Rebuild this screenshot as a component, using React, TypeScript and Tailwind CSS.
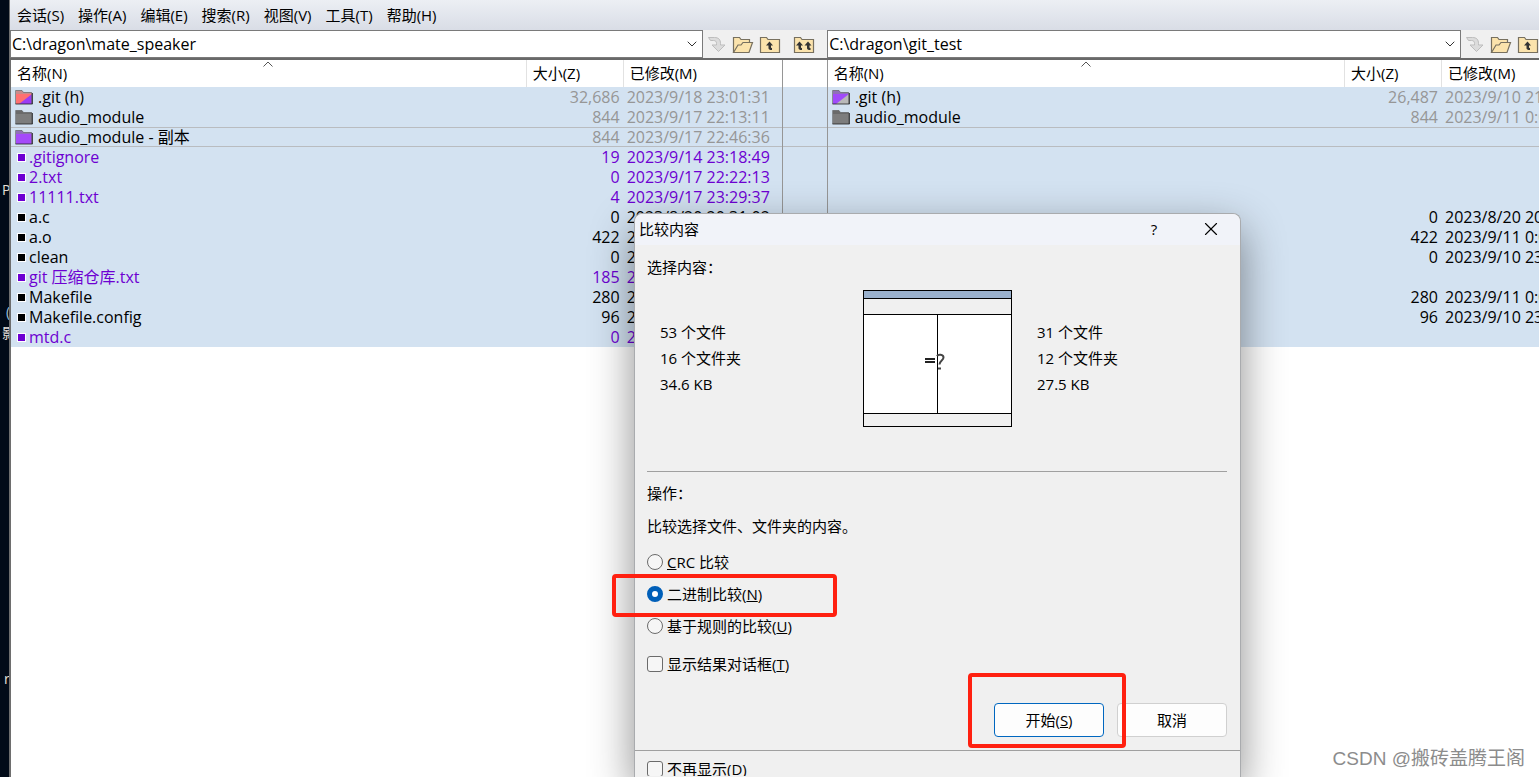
import React, { useState } from 'react';
import { ChevronDown, X } from 'lucide-react';

type Kind = 'same' | 'orphan' | 'folder';

interface Entry {
  name: string;
  icon: string;
  size: string;
  modified: string;
  kind: Kind;
}

const EMPTY: Entry = { name: '', icon: '', size: '', modified: '', kind: 'same' };

const FOCUSED_ROW = 2;

const leftEntries: Entry[] = [
  { name: '.git (h)', icon: 'folder-red', size: '32,686', modified: '2023/9/18 23:01:31', kind: 'folder' },
  { name: 'audio_module', icon: 'folder-gray', size: '844', modified: '2023/9/17 22:13:11', kind: 'folder' },
  { name: 'audio_module - 副本', icon: 'folder-purple', size: '844', modified: '2023/9/17 22:46:36', kind: 'folder' },
  { name: '.gitignore', icon: 'file', size: '19', modified: '2023/9/14 23:18:49', kind: 'orphan' },
  { name: '2.txt', icon: 'file', size: '0', modified: '2023/9/17 22:22:13', kind: 'orphan' },
  { name: '11111.txt', icon: 'file', size: '4', modified: '2023/9/17 23:29:37', kind: 'orphan' },
  { name: 'a.c', icon: 'file', size: '0', modified: '2023/8/20 20:31:02', kind: 'same' },
  { name: 'a.o', icon: 'file', size: '422', modified: '2023/9/11 0:03:12', kind: 'same' },
  { name: 'clean', icon: 'file', size: '0', modified: '2023/9/10 23:40:25', kind: 'same' },
  { name: 'git 压缩仓库.txt', icon: 'file', size: '185', modified: '2023/9/17 22:50:08', kind: 'orphan' },
  { name: 'Makefile', icon: 'file', size: '280', modified: '2023/9/11 0:02:54', kind: 'same' },
  { name: 'Makefile.config', icon: 'file', size: '96', modified: '2023/9/10 23:38:16', kind: 'same' },
  { name: 'mtd.c', icon: 'file', size: '0', modified: '2023/9/17 22:21:40', kind: 'orphan' },
];

const rightEntries: Entry[] = [
  { name: '.git (h)', icon: 'folder-mixed', size: '26,487', modified: '2023/9/10 21:48:30', kind: 'folder' },
  { name: 'audio_module', icon: 'folder-gray', size: '844', modified: '2023/9/11 0:03:12', kind: 'folder' },
  EMPTY,
  EMPTY,
  EMPTY,
  EMPTY,
  { name: 'a.c', icon: 'file', size: '0', modified: '2023/8/20 20:31:02', kind: 'same' },
  { name: 'a.o', icon: 'file', size: '422', modified: '2023/9/11 0:03:12', kind: 'same' },
  { name: 'clean', icon: 'file', size: '0', modified: '2023/9/10 23:40:25', kind: 'same' },
  EMPTY,
  { name: 'Makefile', icon: 'file', size: '280', modified: '2023/9/11 0:02:54', kind: 'same' },
  { name: 'Makefile.config', icon: 'file', size: '96', modified: '2023/9/10 23:38:16', kind: 'same' },
  EMPTY,
];

const menus = ['会话(S)', '操作(A)', '编辑(E)', '搜索(R)', '视图(V)', '工具(T)', '帮助(H)'];

const folderColors: Record<string, [string, string, string]> = {
  'folder-red': ['#ff7070', '#9a3cf5', '#c98a8a'],
  'folder-gray': ['#7d7d7d', '#7d7d7d', '#6a6a6a'],
  'folder-purple': ['#a54bfa', '#a54bfa', '#9070b8'],
  'folder-mixed': ['#a04bfa', '#b9b9b9', '#9070b8'],
};

const FolderGlyph: React.FC<{ icon: string }> = ({ icon }) => {
  const [front, back, tab] = folderColors[icon];
  return (
    <svg width="18" height="16" viewBox="0 0 18 16" className="shrink-0">
      <path d="M1 1.5h6l1.5 2H17V15H1z" fill={tab} />
      <path d="M1 5h16v10H1z" fill={back} />
      <path d="M1 5h16L4 15H1z" fill={front} />
      <path d="M.5 15V1.5h6.500l1.500 2h8V15" fill="none" stroke="#555" strokeOpacity=".6" />
      <path d="M.5 15h17V4" fill="none" stroke="#222" strokeOpacity=".8" />
    </svg>
  );
};

const nameColor: Record<Kind, string> = {
  same: 'text-black',
  orphan: 'text-[#6d00d2]',
  folder: 'text-black',
};

const detailColor: Record<Kind, string> = {
  same: 'text-black',
  orphan: 'text-[#6d00d2]',
  folder: 'text-[#969696]',
};

const SortMark = () => (
  <svg width="11" height="6" viewBox="0 0 11 6" className="absolute top-px left-1/2 -translate-x-1/2">
    <path d="M1 5.500l4.500-4.500L10 5.500" fill="none" stroke="#555" />
  </svg>
);

const FileTable: React.FC<{ entries: Entry[]; modifiedCol: string; label: string }> = ({
  entries,
  modifiedCol,
  label,
}) => (
  <table aria-label={label} className="w-full table-fixed border-separate border-spacing-0">
    <colgroup>
      <col />
      <col className="w-[97px]" />
      <col className={modifiedCol} />
    </colgroup>
    <thead>
      <tr className="h-[27px] bg-white text-left">
        <th className="relative p-0 pb-0.5 pl-1.5 font-normal">
          名称(N)
          <SortMark />
        </th>
        <th className="border-l border-[#e2e2e2] p-0 pb-0.5 pl-1.5 font-normal">大小(Z)</th>
        <th className="border-l border-[#e2e2e2] p-0 pb-0.5 pl-1.5 font-normal whitespace-nowrap">已修改(M)</th>
      </tr>
    </thead>
    <tbody className="text-[16px]">
      {entries.map((item, index) => {
        const line = index === FOCUSED_ROW ? 'border-y border-[#b9bcc0]' : '';
        return (
          <tr key={index} className="h-5 bg-[#d3e2f1] leading-[18px] whitespace-nowrap">
            <td className={`p-0 pl-1 ${line} ${nameColor[item.kind]}`}>
              {item.icon === 'file' && (
                <span className="flex items-center gap-1 pl-[3px]">
                  <span className="h-[7px] w-[7px] bg-current outline-1 outline-white" />
                  {item.name}
                </span>
              )}
              {item.icon.startsWith('folder') && (
                <span className="flex items-center gap-[5px]">
                  <FolderGlyph icon={item.icon} />
                  {item.name}
                </span>
              )}
            </td>
            <td className={`p-0 pr-[3px] text-right ${line} ${detailColor[item.kind]}`}>{item.size}</td>
            <td className={`overflow-hidden p-0 pl-1 ${line} ${detailColor[item.kind]}`}>{item.modified}</td>
          </tr>
        );
      })}
    </tbody>
  </table>
);

const PathBox: React.FC<{ value: string; label: string }> = ({ value, label }) => {
  const [path, setPath] = useState(value);
  return (
    <div className="flex h-7 min-w-0 flex-1 items-center border border-[#7a7a7a] bg-white pr-0.5">
      <input
        aria-label={label}
        value={path}
        onChange={(e) => setPath(e.target.value)}
        className="min-w-0 flex-1 bg-transparent pl-px text-[16px] outline-none"
      />
      <button type="button" aria-label="历史路径">
        <ChevronDown className="h-4 w-4 text-[#333]" strokeWidth={1.5} />
      </button>
    </div>
  );
};

const FolderBase = () => (
  <path d="M1.500 17.500V2.500h6l1.500 2h11.500v13z" fill="#fbe3ac" stroke="#77705f" strokeWidth="1.200" />
);

const JumpIcon = () => (
  <svg width="20" height="18" viewBox="0 0 20 18">
    <path d="M1.500 2.500h6c4 0 6 2 6 6v1.500h4.500l-6.500 6.500L5 10h4.500V8.500c0-2-1-3-3-3h-3z" fill="#dcdcdc" stroke="#bdbdbd" />
  </svg>
);

const OpenFolderIcon = () => (
  <svg width="22" height="19" viewBox="0 0 22 19">
    <path d="M1.500 17.500V2.500h6l1.500 2h8.500V8" fill="#fbe3ac" stroke="#77705f" strokeWidth="1.200" />
    <path d="M1.500 17.500L6 10h3l2-2.500h9.500l-3.500 10z" fill="#fbe3ac" stroke="#77705f" strokeWidth="1.200" />
  </svg>
);

const UpIcon = () => (
  <svg width="22" height="19" viewBox="0 0 22 19">
    <FolderBase />
    <path d="M10.500 6.500L7 10.500h2.500V13c0 1.500 1 2 3.500 2v-2c-1 0-1-.5-1-1v-1.500h2z" fill="#333" />
  </svg>
);

const UpBothIcon = () => (
  <svg width="22" height="19" viewBox="0 0 22 19">
    <FolderBase />
    <path d="M6.500 6.500L3 10.500h2.500V13c0 1.500 1 2 3.500 2v-2c-1 0-1-.5-1-1v-1.500h2z" fill="#333" />
    <path d="M15 6.500l-3.500 4H14V13c0 1.500 1 2 3.500 2v-2c-1 0-1-.5-1-1v-1.500h2z" fill="#333" />
  </svg>
);

const PathTools = () => (
  <div className="flex shrink-0 items-center">
    <button type="button" aria-label="转到" className="ml-1 w-[22px]"><JumpIcon /></button>
    <button type="button" aria-label="浏览文件夹" className="ml-[3px]"><OpenFolderIcon /></button>
    <button type="button" aria-label="上一级" className="ml-[5px]"><UpIcon /></button>
  </div>
);

const Desktop = () => (
  <div className="relative w-[9px] shrink-0 overflow-hidden bg-[#020b18] text-sm leading-5 text-[#e8e0d8]">
    <span className="absolute left-0.5 top-[180px]">P</span>
    <span className="absolute left-1.5 top-[302px] text-[#9fc0d8]">(</span>
    <span className="absolute left-0.5 top-[323px]">影</span>
    <span className="absolute left-1 top-[669px]">r</span>
  </div>
);

const radioClass =
  'h-4 w-4 shrink-0 appearance-none rounded-full border border-[#6b6b6b] bg-[#f6f6f6] checked:border-[5px] checked:border-[#005fb8] checked:bg-white';
const checkClass = 'h-4 w-4 shrink-0 appearance-none rounded-[3px] border border-[#6b6b6b] bg-[#f6f6f6] checked:bg-[#005fb8]';

const LayoutDiagram = () => (
  <svg width="149" height="137" viewBox="0 0 149 137" shapeRendering="crispEdges">
    <rect x=".5" y=".5" width="148" height="136" fill="#f0f0f0" stroke="#000" />
    <rect x="1" y="1" width="147" height="7" fill="#9ab1cd" />
    <rect x="1" y="25" width="147" height="98" fill="#fff" />
    <path d="M0 8.500h149M0 24.500h149M0 123.500h149M74.500 25v98" stroke="#000" />
    <path d="M62 69h10M62 72h10" stroke="#222" strokeWidth="2" />
    <path d="M74 66c1-2 6.500-2 6.500 1.500 0 3-4 3-4 7M75 78.500h3" fill="none" stroke="#444" strokeWidth="2" shapeRendering="auto" />
  </svg>
);

const Stats: React.FC<{ lines: string[]; className: string }> = ({ lines, className }) => (
  <div className={`leading-[26px] ${className}`}>
    {lines.map((line) => (
      <p key={line}>{line}</p>
    ))}
  </div>
);

const CompareDialog = () => {
  const [method, setMethod] = useState('binary');
  const [showResult, setShowResult] = useState(false);
  const [dontShow, setDontShow] = useState(false);

  return (
    <div
      role="dialog"
      aria-label="比较内容"
      className="absolute top-[213px] bottom-0 left-[634px] w-[607px] rounded-t-lg border border-b-0 border-[#a9abae] bg-[#f0f0f0] shadow-[0_16px_44px_rgba(0,0,0,0.45)]"
    >
      <div className="flex h-[31px] items-center rounded-t-lg bg-[#f1f3f9] pb-0.5 pl-1">
        <h1 className="flex-1">比较内容</h1>
        <button type="button" aria-label="帮助" className="mr-[38px] w-4">?</button>
        <button type="button" aria-label="关闭" className="mr-[18px]">
          <X className="h-[22px] w-[22px]" strokeWidth={1.25} />
        </button>
      </div>

      <div className="pt-2.5 pr-[13px] pl-3">
        <h2 className="leading-6">选择内容：</h2>
        <div className="flex h-[193px] items-start border-b border-[#a0a0a0] pt-[11px]">
          <Stats lines={['53 个文件', '16 个文件夹', '34.6 KB']} className="w-[216px] pt-[29px] pl-[13px]" />
          <LayoutDiagram />
          <Stats lines={['31 个文件', '12 个文件夹', '27.5 KB']} className="pt-[29px] pl-[25px]" />
        </div>

        <h2 className="pt-[9px] leading-6">操作：</h2>
        <p className="pt-[9px] leading-6">比较选择文件、文件夹的内容。</p>

        <div className="relative flex flex-col gap-2 pt-3">
          <label className="flex h-6 items-center gap-1">
            <input type="radio" name="method" className={radioClass} checked={method === 'crc'} onChange={() => setMethod('crc')} />
            <span><u>C</u>RC 比较</span>
          </label>
          <label className="flex h-6 items-center gap-1">
            <input type="radio" name="method" className={radioClass} checked={method === 'binary'} onChange={() => setMethod('binary')} />
            <span>二进制比较(<u>N</u>)</span>
          </label>
          <label className="flex h-6 items-center gap-1">
            <input type="radio" name="method" className={radioClass} checked={method === 'rules'} onChange={() => setMethod('rules')} />
            <span>基于规则的比较(<u>U</u>)</span>
          </label>
          <div className="pointer-events-none absolute top-9 -left-[35px] h-[43px] w-[225px] rounded border-4 border-[#ff2010]" />
        </div>

        <label className="mt-3.5 flex h-6 items-center gap-1">
          <input type="checkbox" className={checkClass} checked={showResult} onChange={() => setShowResult(!showResult)} />
          <span>显示结果对话框(<u>T</u>)</span>
        </label>

        <div className="relative mt-[27px] flex justify-end gap-[13px]">
          <button type="button" className="h-[34px] w-[110px] rounded border border-[#0067c0] bg-[#fdfdfd]">
            开始(<u>S</u>)
          </button>
          <button type="button" className="h-[34px] w-[110px] rounded border border-[#d0d0d0] bg-[#fdfdfd]">取消</button>
          <div className="pointer-events-none absolute -top-[30px] right-[101px] h-[75px] w-[158px] rounded border-4 border-[#ff2010]" />
        </div>
      </div>

      <div className="mt-[13px] h-[26px] overflow-hidden border-t border-[#a0a0a0] px-3 pt-1.5">
        <label className="flex h-6 items-center gap-1">
          <input type="checkbox" className={checkClass} checked={dontShow} onChange={() => setDontShow(!dontShow)} />
          <span>不再显示(<u>D</u>)</span>
        </label>
      </div>
    </div>
  );
};

const App: React.FC = () => {
  return (
    <div className="relative flex h-screen overflow-hidden bg-white font-['Open_Sans','Noto_Sans_CJK_SC',sans-serif] text-[15px] leading-5 text-black">
      <Desktop />
      <main className="flex min-w-0 flex-1 flex-col border-l border-[#6e6e6e]">
        <nav className="flex h-[30px] items-center gap-3.5 bg-linear-to-b from-[#eceff4] to-[#d9dde6] pl-[7px]">
          {menus.map((menu) => (
            <button type="button" key={menu}>{menu}</button>
          ))}
        </nav>

        <div className="grid grid-cols-[52fr_46px_48fr] border-b-2 border-[#696969] bg-[#f0f0f0]">
          <div className="flex">
            <PathBox value="C:\dragon\mate_speaker" label="左侧路径" />
            <PathTools />
          </div>
          <div className="flex items-center pl-3">
            <button type="button" aria-label="两侧上一级"><UpBothIcon /></button>
          </div>
          <div className="flex">
            <PathBox value="C:\dragon\git_test" label="右侧路径" />
            <PathTools />
          </div>
        </div>

        <div className="grid flex-1 grid-cols-[52fr_46px_48fr] border-l border-[#6e6e6e]">
          <section className="min-w-0">
            <FileTable entries={leftEntries} modifiedCol="w-[159px]" label="左侧文件" />
          </section>
          <section className="border-x border-[#969696] pt-[27px]">
            {leftEntries.map((_, index) => (
              <div
                key={index}
                className={`h-5 bg-[#d3e2f1] ${index === FOCUSED_ROW ? 'border-y border-[#b9bcc0]' : ''}`}
              />
            ))}
          </section>
          <section className="min-w-0 overflow-hidden">
            <FileTable entries={rightEntries} modifiedCol="w-[98px]" label="右侧文件" />
          </section>
        </div>
      </main>

      <CompareDialog />
      <p className="absolute right-3.5 bottom-1.5 font-['Liberation_Sans','Noto_Sans_CJK_SC',sans-serif] text-[19px] leading-6 text-[#8c8c8c]">
        CSDN @搬砖盖腾王阁
      </p>
    </div>
  );
};

export default App;
